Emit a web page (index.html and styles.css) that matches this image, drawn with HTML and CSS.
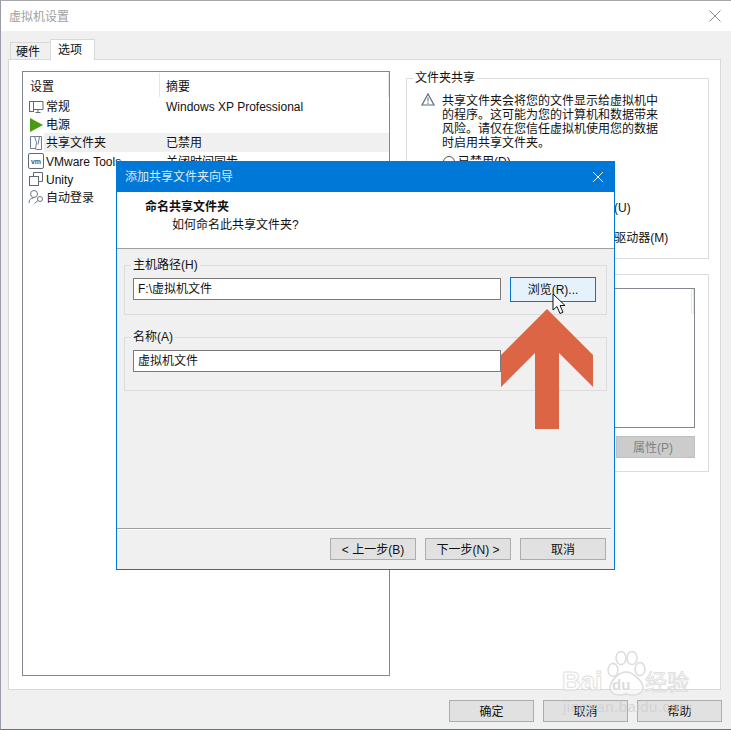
FILE: index.html
```html
<!DOCTYPE html>
<html lang="zh">
<head>
<meta charset="utf-8">
<title>虚拟机设置</title>
<link rel="stylesheet" href="styles.css">
</head>
<body>
<div class="window">
  <div class="titlebar">
    <span class="title">虚拟机设置</span>
    <svg class="close" width="12" height="12" viewBox="0 0 12 12"><path d="M.5.5l11 11M11.500.5l-11 11" stroke="#8c8c8c" fill="none"/></svg>
  </div>
  <div class="body">
    <div class="tabs">
      <div class="tab">硬件</div>
      <div class="tab active">选项</div>
    </div>
    <div class="panel">
      <div class="list">
        <div class="list-head"><span class="col-a">设置</span><span class="col-b">摘要</span></div>
        <div class="row">
          <svg class="ico" width="16" height="14" viewBox="0 0 16 14"><g fill="none" stroke="#5e6a78"><rect x="1.500" y="1.500" width="4" height="10"/><path d="M5.500 1.500h9.500v8h-9.500M10 9.500v2.500M7.500 12.500h5"/></g></svg>
          <span class="name">常规</span><span class="sum">Windows XP Professional</span>
        </div>
        <div class="row">
          <svg class="ico" width="16" height="14" viewBox="0 0 16 14"><path d="M2 0l13 7-13 7z" fill="#4a9a12"/></svg>
          <span class="name">电源</span><span class="sum"></span>
        </div>
        <div class="row selected">
          <svg class="ico" width="16" height="16" viewBox="0 0 16 16"><g fill="none" stroke="#6d7f94"><path d="M2.500 1.500h11v13h-5l-1-1h-5z"/><path d="M6.500 1.500l2 6-1 7M11.500 1.500l-1.500 8"/></g></svg>
          <span class="name">共享文件夹</span><span class="sum">已禁用</span>
        </div>
        <div class="row">
          <svg class="ico" width="16" height="16" viewBox="0 0 16 16"><rect x=".5" y=".5" width="15" height="15" rx="1.500" fill="#fff" stroke="#5e6a78"/><text x="8" y="10.500" class="vm">vm</text></svg>
          <span class="name">VMware Tools</span><span class="sum">关闭时间同步</span>
        </div>
        <div class="row">
          <svg class="ico" width="16" height="16" viewBox="0 0 16 16"><g fill="none" stroke="#5e6a78"><rect x="1.500" y="5.500" width="9" height="9"/><path d="M5.500 5V1.500h9v9H11"/></g></svg>
          <span class="name">Unity</span><span class="sum"></span>
        </div>
        <div class="row">
          <svg class="ico" width="16" height="16" viewBox="0 0 16 16"><g fill="none" stroke="#6b7682"><circle cx="6" cy="5" r="3.500"/><path d="M1 14c0-3 2-5 4.500-5"/><circle cx="12" cy="10" r="2.500"/><path d="M10 11.500l-3.500 3"/></g></svg>
          <span class="name">自动登录</span><span class="sum"></span>
        </div>
      </div>
      <div class="side">
        <fieldset class="group share">
          <legend>文件夹共享</legend>
          <div class="warn">
            <svg class="warn-ico" width="14" height="13" viewBox="0 0 14 13"><path d="M7 1l6 11H1z" fill="none" stroke="#5e6a78" stroke-width="1.200"/><path d="M7 4.500v4M7 9.500v1.500" stroke="#5e6a78"/></svg>
            <p>共享文件夹会将您的文件显示给虚拟机中<br>的程序。这可能为您的计算机和数据带来<br>风险。请仅在您信任虚拟机使用您的数据<br>时启用共享文件夹。</p>
          </div>
          <div class="opt"><span class="radio"></span>已禁用(D)</div>
          <div class="opt"><span class="radio"></span>总是启用(E)</div>
          <div class="opt"><span class="radio"></span>在下次关机或挂起前一直启用(U)</div>
          <div class="opt map">在 Windows 客户机中映射为网络驱动器(M)</div>
        </fieldset>
        <div class="group folders">
          <div class="folder-list"><div class="folder-head"><span class="fh"></span><span class="fh"></span></div></div>
          <div class="folder-btns"><button class="btn prop">属性(P)</button></div>
        </div>
      </div>
    </div>
    <div class="footer">
      <button class="btn wide">确定</button>
      <button class="btn wide">取消</button>
      <button class="btn wide">帮助</button>
    </div>
  </div>

  <div class="dialog">
    <div class="dlg-title">
      <span>添加共享文件夹向导</span>
      <svg width="12" height="12" viewBox="0 0 12 12"><path d="M1 1l10 10M11 1L1 11" stroke="#fff" fill="none"/></svg>
    </div>
    <div class="dlg-head">
      <div class="dlg-h1">命名共享文件夹</div>
      <div class="dlg-h2">如何命名此共享文件夹?</div>
    </div>
    <div class="dlg-body">
      <fieldset class="dlg-group first">
        <legend>主机路径(H)</legend>
        <div class="path-row">
          <div class="input">F:\虚拟机文件</div>
          <button class="btn browse">浏览(R)...</button>
        </div>
      </fieldset>
      <fieldset class="dlg-group second">
        <legend>名称(A)</legend>
        <div class="input">虚拟机文件</div>
      </fieldset>
    </div>
    <div class="dlg-foot">
      <button class="btn">&lt; 上一步(B)</button>
      <button class="btn">下一步(N) &gt;</button>
      <button class="btn">取消</button>
    </div>
  </div>

  <svg class="arrow" width="92" height="120" viewBox="0 0 92 120"><path d="M46 0l46 46v32L58 44v76H34V44L0 78V46z" fill="#dc6546"/></svg>
  <svg class="cursor" width="14" height="22" viewBox="0 0 14 22"><path d="M1 1v16l4-3.500 3 7 3-1.300-3-6.700h5z" fill="#fff" stroke="#111" stroke-linejoin="round"/></svg>

  <div class="mark">
    <svg class="paw" width="42" height="46" viewBox="0 0 42 46"><g fill="#fff" fill-opacity=".5" stroke="#dcdcdc" stroke-width="1.500"><ellipse cx="7" cy="19" rx="5" ry="6.500"/><ellipse cx="15" cy="7" rx="5" ry="6.500"/><ellipse cx="26" cy="7" rx="5" ry="6.500"/><ellipse cx="34" cy="18" rx="5" ry="6.500"/><path d="M20 21c-7 0-16 9-16 16 0 7 9 8 16 6 7 2 17 1 17-6 0-7-10-16-17-16z"/></g></svg>
    <span class="mark-baidu">Bai</span><span class="mark-du">du</span><span class="mark-jy">经验</span>
    <div class="mark-url">jingyan.baidu.com</div>
  </div>
</div>
</body>
</html>
```
FILE: styles.css
```css
* { box-sizing: border-box; }
html, body { margin: 0; padding: 0; }
body {
  width: 731px;
  height: 730px;
  overflow: hidden;
  background: #fff;
  font: 12px/18px "Liberation Sans", "Noto Sans CJK SC", sans-serif;
  color: #111;
}
.window {
  position: relative;
  width: 731px;
  height: 730px;
  border-top: 1px solid #a8a8a8;
  border-left: 1px solid #9a9aa8;
  border-bottom: 1px solid #5a74a8;
  display: flex;
  flex-direction: column;
  overflow: hidden;
}
.titlebar {
  height: 30px;
  flex: none;
  background: #fff;
  display: flex;
  align-items: center;
  justify-content: space-between;
  padding: 0 10px 0 8px;
}
.title { color: #a0a0a0; font-size: 12px; padding-top: 1px; }
.body {
  flex: 1;
  background: #f0f0f0;
  padding: 8px 10px 0 7px;
  display: flex;
  flex-direction: column;
  min-height: 0;
}
.tabs { display: flex; align-items: flex-end; height: 21px; flex: none; padding-left: 2px; margin-bottom: -1px; }
.tab {
  width: 41px;
  height: 18px;
  background: #f0f0f0;
  border: 1px solid #d9d9d9;
  border-bottom: 0;
  padding-left: 5px;
  line-height: 18px;
}
.tab.active {
  width: 45px;
  height: 21px;
  margin-left: -1px;
  padding-left: 7px;
  background: #fff;
  line-height: 20px;
  position: relative;
  z-index: 1;
}
.panel {
  height: 631px;
  flex: none;
  background: #fff;
  border: 1px solid #d9d9d9;
  padding: 11px 12px 13px 13px;
  display: flex;
  gap: 16px;
}
.list {
  width: 368px;
  border: 1px solid #828790;
  padding-top: 1px;
  flex: none;
}
.list-head { display: flex; height: 24px; line-height: 28px; }
.col-a { width: 137px; padding-left: 7px; border-right: 1px solid #e5e5e5; }
.col-b { flex: 1; padding-left: 6px; border-right: 1px solid #e5e5e5; }
.row {
  display: grid;
  grid-template-columns: 16px 121px 1fr;
  align-items: center;
  height: 18.2px;
  margin-left: 5px;
}
.row .name { padding: 1px 0 0 2px; }
.row .sum { padding: 1px 0 0 1px; }
.row.selected { background: linear-gradient(to right, #fff 16px, #f0f0f0 16px); }
.vm { font: 700 7px "Liberation Sans", sans-serif; fill: #4c5866; text-anchor: middle; }
.side { flex: 1; display: flex; flex-direction: column; min-width: 0; margin-top: -2px; }
.group { border: 1px solid #dcdcdc; margin: 0; }
.share {
  height: 190px;
  width: 303px;
  padding: 0 0 0 14px;
}
legend { padding: 0 2px; margin-left: -8px; line-height: 18px; }
.warn { display: flex; gap: 7px; margin-top: 4px; }
.warn-ico { flex: none; margin-top: 2px; }
.warn p { margin: 0; line-height: 14px; padding-top: 3px; }
.opt { display: flex; align-items: center; gap: 3px; height: 23px; margin-left: 22px; white-space: nowrap; }
.radio { width: 12px; height: 12px; border: 1px solid #555; border-radius: 50%; flex: none; background: #fff; }
.opt.map { margin-left: 0; margin-top: 7px; padding-left: 18px; }
.folders {
  height: 198px;
  width: 303px;
  margin-top: 15px;
  padding: 13px 13px 12px;
  display: flex;
  flex-direction: column;
}
.folder-list { height: 140px; border: 1px solid #828790; flex: none; }
.folder-head { display: flex; justify-content: flex-end; height: 25px; }
.fh { width: 35px; border-right: 1px solid #e5e5e5; }
.fh:last-child { width: 2px; }
.folder-btns { display: flex; justify-content: flex-end; margin-top: 8px; }
.btn {
  font: inherit;
  color: #111;
  width: 86px;
  height: 22px;
  padding: 1px 0 0;
  background: #e1e1e1;
  border: 1px solid #adadad;
}
.prop { width: 79px; padding-right: 5px; background: #ccc; border-color: #bfbfbf; color: #838383; }
.footer { display: flex; justify-content: flex-end; gap: 9px; margin-top: 10px; margin-right: -1px; }
.wide { width: 85px; }
.dialog {
  position: absolute;
  left: 115px;
  top: 160px;
  width: 499px;
  height: 409px;
  background: #f0f0f0;
  border: 1px solid #0078d7;
  display: flex;
  flex-direction: column;
}
.dlg-title {
  height: 31px;
  flex: none;
  margin: -1px -1px 0;
  background: #0078d7;
  color: #dcebf8;
  display: flex;
  align-items: center;
  justify-content: space-between;
  padding: 0 11px 0 9px;
}
.dlg-head {
  height: 57px;
  flex: none;
  background: #fff;
  border-bottom: 1px solid #a0a0a0;
  padding: 6px 0 0 28px;
}
.dlg-h1 { font-weight: 700; line-height: 18px; }
.dlg-h2 { padding-left: 27px; line-height: 18px; }
.dlg-body { flex: 1; padding: 7px 7px 0; display: flex; flex-direction: column; gap: 13px; min-height: 0; }
.dlg-group { margin: 0; padding: 0 8px; border: 1px solid #dcdcdc; }
.dlg-group legend { margin-left: -2px; padding: 0 2px; }
.dlg-group.first { height: 59px; }
.dlg-group.second { height: 63px; }
.path-row { display: flex; gap: 9px; align-items: flex-start; }
.input {
  width: 368px;
  height: 22px;
  flex: none;
  margin-top: 4px;
  background: #fff;
  border: 1px solid #7a7a7a;
  line-height: 21px;
  padding-left: 4px;
}
.browse {
  width: 86px;
  height: 25px;
  margin-top: 3px;
  background: #e5f1fb;
  border-color: #0078d7;
}
.dlg-foot {
  height: 41px;
  flex: none;
  margin-right: 3px;
  border-top: 1px solid #a0a0a0;
  box-shadow: inset 0 1px 0 #fff;
  display: flex;
  justify-content: flex-end;
  gap: 9px;
  padding: 9px 5px 0 0;
}
.arrow { position: absolute; left: 500px; top: 308px; }
.cursor { position: absolute; left: 551px; top: 292px; }
.mark { position: absolute; left: 560px; top: 650px; width: 132px; height: 70px; pointer-events: none; }
.paw { position: absolute; left: 45px; top: 0; }
.mark-baidu {
  position: absolute; left: 1px; top: 15px;
  font: 700 26px/30px "Liberation Sans", sans-serif;
  color: #fff;
  -webkit-text-stroke: 1px #dcdcdc;
  opacity: .85;
}
.mark-du {
  position: absolute; left: 51px; top: 26px;
  font: 700 15px/16px "Liberation Sans", sans-serif;
  color: #dcdcdc;
}
.mark-jy {
  position: absolute; left: 84px; top: 15px;
  font: 22px/28px "Noto Sans CJK SC", sans-serif;
  color: #fff;
  -webkit-text-stroke: 1px #dcdcdc;
  opacity: .85;
}
.mark-url {
  position: absolute; left: 2px; top: 47px;
  font: 15px/18px "Liberation Sans", sans-serif;
  letter-spacing: .5px;
  color: rgba(205,205,205,.75);
  white-space: nowrap;
}
```
